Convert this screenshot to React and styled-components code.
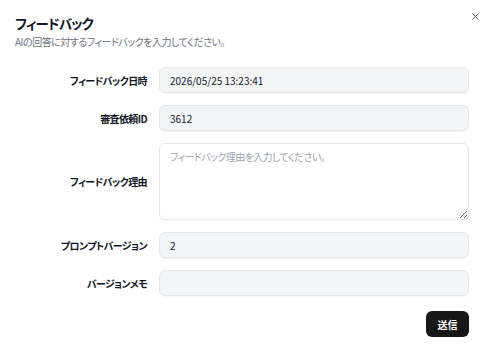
import React from 'react';
import styled, { createGlobalStyle } from 'styled-components';
import { X } from 'lucide-react';

const GlobalStyle = createGlobalStyle`
    body {
        margin: 0;
        background: #ffffff;
        font-family: "Noto Sans CJK JP", "Noto Sans", sans-serif;
        font-feature-settings: "palt";
        color: #111827;
    }
`
const Dialog = styled.div`
    position: relative;
    width: 492px;
    height: 355px;
    box-sizing: border-box;
    padding: 14px 23px 0 15px;
    background: #ffffff;
`
const CloseButton = styled.button`
    position: absolute;
    top: 8px;
    right: 9px;
    width: 16px;
    height: 16px;
    padding: 0;
    border: none;
    background: transparent;
    color: #4b5563;
    display: flex;
    align-items: center;
    justify-content: center;
    cursor: pointer;
`
const Title = styled.h2`
    margin: 0;
    font-size: 13.5px;
    line-height: 18px;
    font-weight: 700;
    letter-spacing: -0.9px;
`
const Subtitle = styled.p`
    margin: 3px 0 0;
    font-size: 10px;
    line-height: 14px;
    color: #6b7280;
    letter-spacing: -0.5px;
`
const Form = styled.form`
    display: grid;
    grid-template-columns: 132px 310px;
    column-gap: 12px;
    row-gap: 12px;
    margin-top: 18px;
    align-items: center;
`
const Label = styled.label`
    text-align: right;
    font-size: 10px;
    font-weight: 700;
    letter-spacing: -0.6px;
`
const fieldBase = `
    box-sizing: border-box;
    width: 100%;
    border: 1px solid #e5e7eb;
    border-radius: 6px;
    background: #f3f4f6;
    box-shadow: 0 1px 1px rgba(0, 0, 0, 0.04);
    font-family: "Noto Sans CJK JP", "Noto Sans", sans-serif;
    font-feature-settings: "palt";
    font-size: 10px;
    color: #111827;
    padding: 0 10px;
    outline: none;
`
const Input = styled.input`
    ${fieldBase}
    height: 26px;
`
const TextArea = styled.textarea`
    ${fieldBase}
    height: 77px;
    padding: 6px 10px;
    background: #ffffff;
    resize: vertical;
    line-height: 14px;
    letter-spacing: -0.6px;
    &::placeholder {
        color: #9ca3af;
    }
`
const Actions = styled.div`
    grid-column: 1 / 3;
    display: flex;
    justify-content: flex-end;
    margin-top: 3px;
`
const SubmitButton = styled.button`
    width: 43px;
    height: 26px;
    border: none;
    border-radius: 6px;
    background: #171717;
    color: #ffffff;
    font-family: "Noto Sans CJK JP", "Noto Sans", sans-serif;
    font-size: 10px;
    font-weight: 700;
    cursor: pointer;
`

export default function App() {
    return (
        <>
            <GlobalStyle />
            <Dialog>
                <CloseButton aria-label="閉じる">
                    <X size={11} strokeWidth={2} />
                </CloseButton>
                <Title>フィードバック</Title>
                <Subtitle>AIの回答に対するフィードバックを入力してください。</Subtitle>
                <Form onSubmit={e => e.preventDefault()}>
                    <Label>フィードバック日時</Label>
                    <Input defaultValue="2026/05/25 13:23:41" readOnly />
                    <Label>審査依頼ID</Label>
                    <Input defaultValue="3612" readOnly />
                    <Label>フィードバック理由</Label>
                    <TextArea placeholder="フィードバック理由を入力してください。" />
                    <Label>プロンプトバージョン</Label>
                    <Input defaultValue="2" />
                    <Label>バージョンメモ</Label>
                    <Input />
                    <Actions>
                        <SubmitButton type="submit">送信</SubmitButton>
                    </Actions>
                </Form>
            </Dialog>
        </>
    );
}
